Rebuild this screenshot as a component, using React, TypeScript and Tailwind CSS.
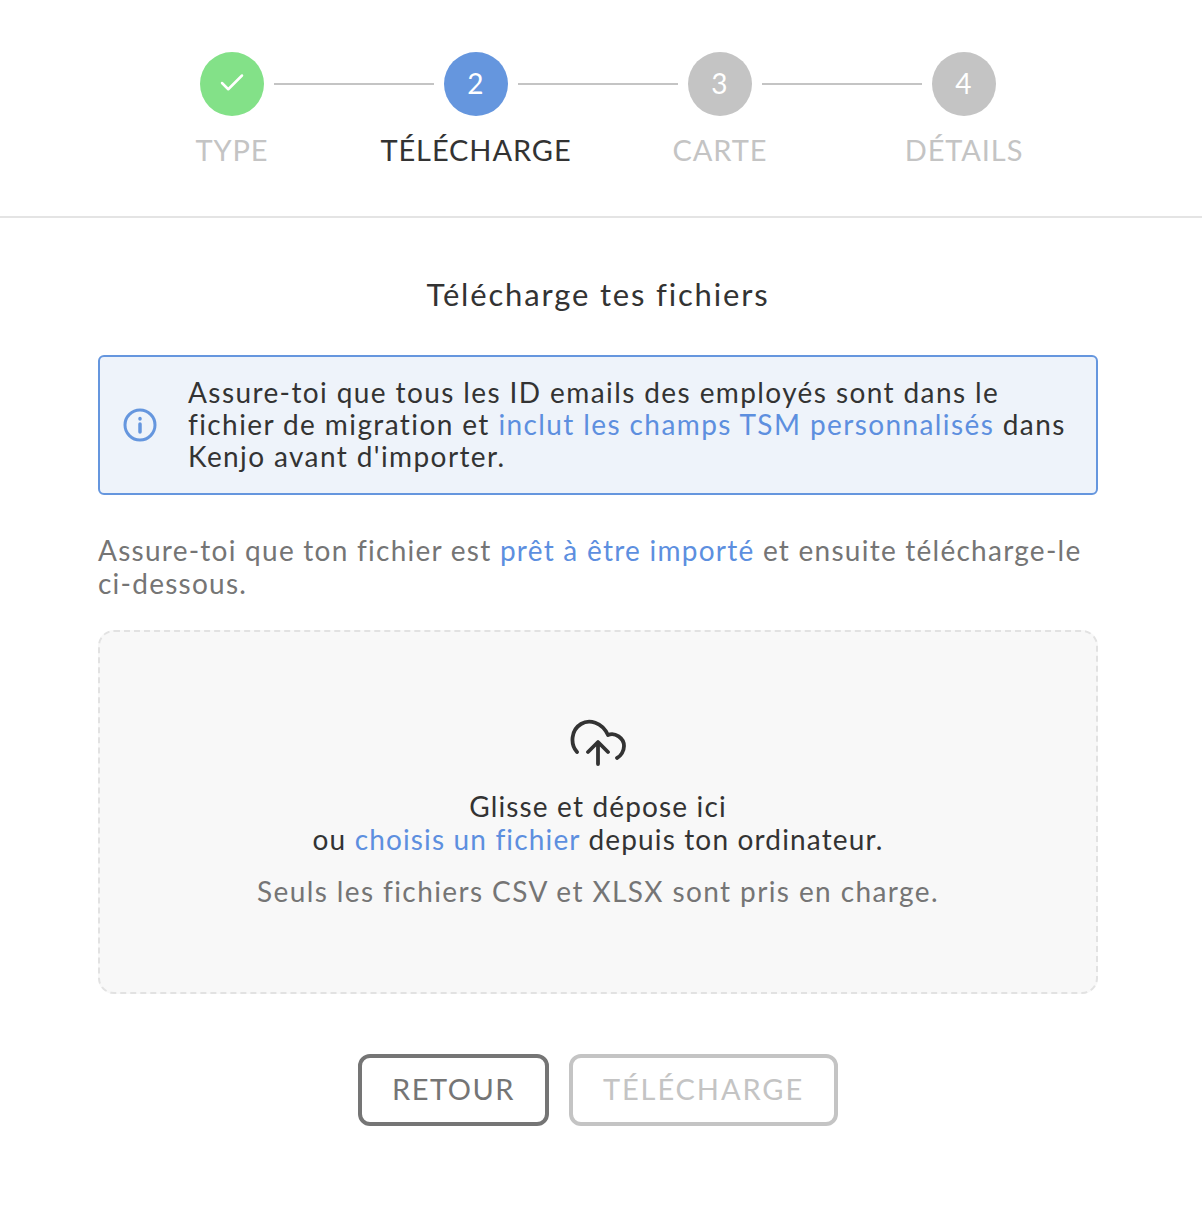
import React from "react";
import { Check } from "lucide-react";

const FONT = "font-['Lato','Noto_Sans',sans-serif]";

const steps = [
  { label: "TYPE", state: "done" },
  { label: "TÉLÉCHARGE", state: "active" },
  { label: "CARTE", state: "todo" },
  { label: "DÉTAILS", state: "todo" },
];

const circleClass: Record<string, string> = {
  done: "bg-[#83e188]",
  active: "bg-[#6596de]",
  todo: "bg-[#c4c4c4]",
};

const A = ({ children }: { children: React.ReactNode }) => (
  <a className="text-[#5d8fdf]">{children}</a>
);

const Stepper = () => (
  <div className="h-[218px] border-b-2 border-[#e4e4e4] pt-[52px] pr-[6px]">
    <div className="flex items-center justify-center gap-[10px]">
      {steps.map((step, i) => (
        <React.Fragment key={step.label}>
          {i > 0 && <div className="h-[2px] w-[160px] bg-[#c4c4c4]" />}
          <div
            className={`flex h-16 w-16 items-center justify-center rounded-full pb-[2px] text-[28px] text-white ${circleClass[step.state]}`}
          >
            {step.state === "done" ? <Check size={30} strokeWidth={2} /> : i + 1}
          </div>
        </React.Fragment>
      ))}
    </div>
    <div className="mt-[16px] flex justify-center">
      {steps.map((step) => (
        <div
          key={step.label}
          className={`w-[244px] text-center text-[29px] leading-9 tracking-[0.9px] ${step.state === "active" ? "text-[#333333]" : "text-[#c4c4c4]"}`}
        >
          {step.label}
        </div>
      ))}
    </div>
  </div>
);

const UploadIcon = () => (
  <svg width="58" height="50" viewBox="0 0 58 50" fill="none" stroke="#333333" strokeWidth="3.8" strokeLinecap="round" strokeLinejoin="round">
    <path d="M8 33 C1 25 2 11 12 5 C20 0 33 3 39 16 C46 13 55 19 55 27 C55 32 52 37 48 39" />
    <path d="M29 45 V24 M19 33 L29 23 L39 33" />
  </svg>
);

export default function App() {
  return (
    <div className={`h-[1206px] w-[1202px] bg-white tracking-[1.25px] ${FONT}`}>
      <Stepper />
      <div className="pl-[98px] pr-[104px]">
        <h1 className="mt-[56px] text-center text-[31px] font-normal leading-10 tracking-[1.83px] text-[#333333]">
          Télécharge tes fichiers
        </h1>
        <div className="mt-[41px] flex h-[140px] items-center rounded-md border-2 border-[#6596de] bg-[#eef3fa] pl-[23px] pr-[24px]">
          <svg width="34" height="34" viewBox="0 0 34 34" fill="none" stroke="#6596de" strokeWidth="3" strokeLinecap="round" className="shrink-0">
            <circle cx="17" cy="17" r="15" />
            <path d="M17 16 V24 M17 10.5 V11" strokeWidth="3.5" />
          </svg>
          <p className="ml-[31px] pb-[2px] text-[28px] leading-8 tracking-[1.4px] text-[#333333]">
            Assure-toi que tous les ID emails des employés sont dans le fichier de migration et{" "}
            <A>inclut les champs TSM personnalisés</A> dans Kenjo avant d'importer.
          </p>
        </div>
        <p className="mt-[39px] text-[28px] leading-[33px] text-[#757575]">
          Assure-toi que ton fichier est <A>prêt à être importé</A> et ensuite télécharge-le{" "}
          <span className="whitespace-nowrap">ci-dessous.</span>
        </p>
        <div className="mt-[30px] flex h-[364px] flex-col items-center rounded-2xl border-2 border-dashed border-[#e2e2e2] bg-[#f8f8f8] pt-[87px] text-center">
          <UploadIcon />
          <p className="mt-[21px] text-[28px] leading-[33px] tracking-[1.15px] text-[#333333]">
            Glisse et dépose ici
            <br />
            ou <A>choisis un fichier</A> depuis ton ordinateur.
          </p>
          <p className="mt-[19px] text-[28px] leading-[33px] tracking-[1.4px] text-[#757575]">
            Seuls les fichiers CSV et XLSX sont pris en charge.
          </p>
        </div>
        <div className="mt-[60px] flex justify-center gap-[20px]">
          <button className="h-[72px] w-[191px] rounded-xl border-4 border-[#757575] pb-[2px] text-[29px] tracking-[1.5px] text-[#757575]">
            RETOUR
          </button>
          <button className="h-[72px] w-[269px] rounded-xl border-4 border-[#c4c4c4] pb-[2px] text-[29px] tracking-[1.9px] text-[#c4c4c4]">
            TÉLÉCHARGE
          </button>
        </div>
      </div>
    </div>
  );
}
